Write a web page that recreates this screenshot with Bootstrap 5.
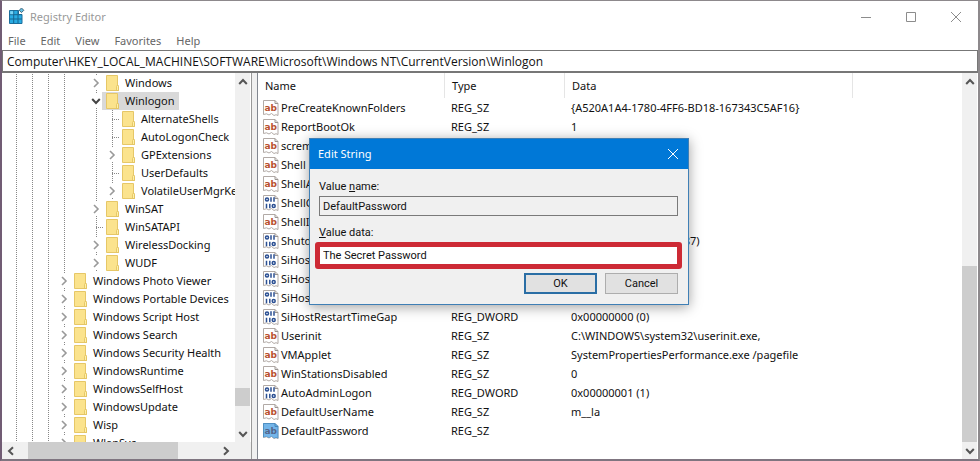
<!DOCTYPE html>
<html lang="en">
<head>
<meta charset="utf-8">
<meta name="viewport" content="width=device-width, initial-scale=1">
<title>Registry Editor</title>
<link href="https://cdn.jsdelivr.net/npm/bootstrap@5.3.0/dist/css/bootstrap.min.css" rel="stylesheet">
<style>
body{font-family:"Noto Sans","Open Sans",sans-serif;font-size:11px;line-height:18px;color:#111}
button,input{font:inherit;color:inherit}
svg{display:block;flex:none}
.frame{border:1px solid #8d898c;border-left:2px solid #715c74;border-bottom:2px solid #7f7580;border-right:2px solid #8d898c}
.titlebar{height:31px;color:#999}
.app-icon{margin:0 4px 0 6px}
.plain{background:none;border:0;padding:0;display:flex;align-items:center;justify-content:center}
.winbtn{width:45px;height:29px;color:#8c8c8c}
.menus{height:18px;gap:15px;padding-left:6px}
.menus a{color:#666;text-decoration:none}
.address{height:23px;border:1px solid #777;border-bottom-width:2px;padding:0 4px;outline:0;background:#fff;width:100%;font-family:"Open Sans","Noto Sans",sans-serif;font-size:12px}
.tree{width:250px;flex:none;border-right:1px solid #999}
.nodes{padding-top:1px}
.node{height:18px;padding-left:6px;display:flex;align-items:stretch;white-space:nowrap}
.cell{width:16px;flex:none}
.guide,.stub{background:repeating-linear-gradient(to bottom,#888 0 1px,transparent 1px 2px) 8px 0/1px 100% no-repeat}
.stub{background:repeating-linear-gradient(to right,#888 0 1px,transparent 1px 2px) 8px 9px/8px 1px no-repeat,repeating-linear-gradient(to bottom,#888 0 1px,transparent 1px 2px) 8px 0/1px 100% no-repeat}
.toggle{color:#999;background:linear-gradient(#888,#888) 8px 0/1px 1px no-repeat,linear-gradient(#888,#888) 8px 16px/1px 1px no-repeat}
.toggle.open{color:#444}
.leaf{display:flex;color:inherit;text-decoration:none;padding:0 4px 0 2px;margin-left:-2px}
.leaf span{padding-left:5px}
.leaf.on{background:#d9d9d9}
.vbar{width:16px;flex:none;background:#f0f0f0;color:#555;border-right:1px solid #fff}
.vbar .plain{width:15px;height:17px}
.hbar{height:17px;flex:none;background:#f0f0f0;color:#555}
.thumb{background:#cdcdcd}
.thumb-short{height:18px;margin-bottom:19px}
.thumb-wide{width:83%}
.split{width:5px;flex:none;background:#f0f0f0}
.list{border-left:1px solid #828790}
.values{width:595px;table-layout:fixed;border-collapse:separate;border-spacing:0}
.values th{font-weight:400;height:25px;padding:0 0 0 7px;border-right:1px solid #e5e5e5}
.values td{height:19px;padding:0 0 0 6px;white-space:nowrap;line-height:19px}
.values td:first-child{padding-left:5px}
.sheet-icon{margin-right:2px}
.dlg{position:absolute;left:309px;top:138px;width:380px;background:#f0f0f0;border:1px solid #3f7fb5;box-shadow:0 2px 12px rgba(0,0,0,.38);font-family:Roboto,"Liberation Sans",sans-serif}
.dlg-head{height:30px;background:#0078d7;color:#fff;font-family:"Noto Sans","Open Sans",sans-serif}
.dlg-body{padding:9px 10px 10px 9px}
.dlg-body label{display:block}
.field{display:block;width:100%;height:20px;border:1px solid #7a7a7a;background:#f0f0f0;padding:0 3px;outline:0}
.marked{border:5px solid #cd2a35;border-radius:3px;background:#fff;height:27px;margin:0 -4px}
.marked input{width:100%;border:0;outline:0;padding:0 3px;display:block;height:17px;line-height:17px}
.act{width:73px;height:21px;background:#e1e1e1;border:1px solid #adadad;padding:0;line-height:17px}
.act.main{border:2px solid #2a6ea5}
</style>
<script src="https://cdn.jsdelivr.net/npm/bootstrap@5.3.0/dist/js/bootstrap.bundle.min.js"></script>
</head>
<body>
<svg width="0" height="0" class="position-absolute" aria-hidden="true">
<symbol id="folder" viewBox="0 0 16 18"><path d="M2.5 1.500h11v9.500l1 1v4.500h-12z" fill="#fbe38d" stroke="#e6c767"/><path d="M12.500 16.500v-4l1-1.500 1 1.500v4z" fill="#fff0a8" stroke="#dfbf5c" stroke-width=".8"/></symbol>
<symbol id="sheet" viewBox="0 0 16 16"><path d="M.5.5h11.500l3 3v12l-2-.8-2 .8-2.500-2-2.500 1.500-2.500-1.200-3 .7z" fill="#fff" stroke="#b2aaa6"/><path d="M12 .5v3h3" fill="none" stroke="#9a9490"/></symbol>
<symbol id="right" viewBox="0 0 10 10"><path d="M3 1l4 4-4 4" fill="none" stroke="currentColor" stroke-width="1.600"/></symbol>
<symbol id="down" viewBox="0 0 10 10"><path d="M1.200 3l3.800 4 3.800-4" fill="none" stroke="currentColor" stroke-width="2"/></symbol>
<symbol id="up" viewBox="0 0 10 10"><path d="M1.200 7l3.800-4 3.800 4" fill="none" stroke="currentColor" stroke-width="2"/></symbol>
</svg>
<div class="frame vh-100 d-flex flex-column bg-white overflow-hidden">
  <header class="titlebar d-flex align-items-center flex-shrink-0">
    <svg class="app-icon" width="18" height="18" viewBox="0 0 18 18"><path d="M1.500 2.500h9v4h3.500v9H1.500z" fill="#29abe2" stroke="#1c6f9d"/><path d="M5.700 2.500v13M10 2.500v13M1.500 6.700H14M1.500 11H14" stroke="#176691" fill="none"/><path d="M2.200 3.200h3v3h-3z" fill="#7ad3f4"/><path d="M13.500 0l2.300 2.300-2.300 2.300-2.300-2.300z" fill="#63bfe3" stroke="#446577"/></svg>
    <span class="flex-grow-1">Registry Editor</span>
    <button class="plain winbtn" aria-label="Minimize"><svg width="12" height="12"><path d="M1 6.500h10" stroke="currentColor"/></svg></button>
    <button class="plain winbtn" aria-label="Maximize"><svg width="12" height="12"><path d="M1.500 1.500h9v9h-9z" fill="none" stroke="currentColor"/></svg></button>
    <button class="plain winbtn" aria-label="Close"><svg width="12" height="12"><path d="M1 1l10 10M11 1L1 11" stroke="currentColor"/></svg></button>
  </header>
  <nav class="menus d-flex flex-shrink-0"><a href="#">File</a><a href="#">Edit</a><a href="#">View</a><a href="#">Favorites</a><a href="#">Help</a></nav>
  <input class="address flex-shrink-0" aria-label="Address" value="Computer\HKEY_LOCAL_MACHINE\SOFTWARE\Microsoft\Windows NT\CurrentVersion\Winlogon">
  <main class="d-flex flex-grow-1 overflow-hidden">
    <section class="tree d-flex flex-column">
      <div class="d-flex flex-grow-1 overflow-hidden">
        <div id="nodes" class="nodes flex-grow-1 overflow-hidden"></div>
        <div class="vbar d-flex flex-column">
          <button class="plain" aria-label="Scroll up"><svg width="10" height="10"><use href="#up"/></svg></button>
          <div class="flex-grow-1 d-flex flex-column justify-content-end"><div class="thumb thumb-short"></div></div>
          <button class="plain" aria-label="Scroll down"><svg width="10" height="10"><use href="#down"/></svg></button>
        </div>
      </div>
      <div class="hbar d-flex">
        <button class="plain px-1" aria-label="Scroll left"><svg width="10" height="10" viewBox="0 0 10 10"><path d="M7 1.200L3 5l4 3.800" fill="none" stroke="currentColor" stroke-width="2"/></svg></button>
        <div class="flex-grow-1 px-2"><div class="thumb thumb-wide h-100"></div></div>
        <button class="plain px-1 me-3" aria-label="Scroll right"><svg width="10" height="10" viewBox="0 0 10 10"><path d="M3 1.200L7 5 3 8.800" fill="none" stroke="currentColor" stroke-width="2"/></svg></button>
      </div>
    </section>
    <div class="split"></div>
    <section class="list d-flex flex-grow-1 overflow-hidden">
      <div class="flex-grow-1 overflow-hidden">
        <table class="values">
          <colgroup><col style="width:187px"><col style="width:120px"><col></colgroup>
          <thead><tr><th scope="col">Name</th><th scope="col">Type</th><th scope="col">Data</th></tr></thead>
          <tbody id="rows"></tbody>
        </table>
      </div>
      <div class="vbar d-flex flex-column">
        <button class="plain" aria-label="Scroll up"><svg width="10" height="10"><use href="#up"/></svg></button>
        <div class="flex-grow-1 d-flex flex-column justify-content-end"><div class="thumb h-50"></div></div>
        <button class="plain" aria-label="Scroll down"><svg width="10" height="10"><use href="#down"/></svg></button>
      </div>
    </section>
  </main>
</div>
<div class="dlg" role="dialog" aria-labelledby="dlgTitle">
  <div class="dlg-head d-flex align-items-center justify-content-between ps-2">
    <span id="dlgTitle">Edit String</span>
    <button class="plain px-2" aria-label="Close dialog"><svg width="14" height="12"><path d="M2 1l10 10M12 1L2 11" stroke="#fff"/></svg></button>
  </div>
  <form class="dlg-body">
    <label for="vname">Value <u>n</u>ame:</label>
    <input id="vname" class="field mb-2" value="DefaultPassword" readonly>
    <label for="vdata"><u>V</u>alue data:</label>
    <div class="marked"><input id="vdata" value="The Secret Password"></div>
    <div class="d-flex justify-content-end gap-2 mt-1"><button type="button" class="act main">OK</button><button type="button" class="act">Cancel</button></div>
  </form>
</div>
<script>
// depth, label, expander (r = collapsed, d = open, s = none)
const nodes=[[5,'Windows','r'],[5,'Winlogon','d'],[6,'AlternateShells','s'],[6,'AutoLogonCheck','s'],[6,'GPExtensions','r'],[6,'UserDefaults','s'],[6,'VolatileUserMgrKey','r'],[5,'WinSAT','r'],[5,'WinSATAPI','s'],[5,'WirelessDocking','r'],[5,'WUDF','r'],[3,'Windows Photo Viewer','r'],[3,'Windows Portable Devices','r'],[3,'Windows Script Host','r'],[3,'Windows Search','r'],[3,'Windows Security Health','r'],[3,'WindowsRuntime','r'],[3,'WindowsSelfHost','r'],[3,'WindowsUpdate','r'],[3,'Wisp','r'],[3,'WlanSvc','r']];
document.getElementById('nodes').innerHTML=nodes.map(([d,t,e])=>{
  let h='';
  for(let i=0;i<d;i++)h+=`<span class="cell${i===4?'':' guide'}"></span>`;
  h+=e==='s'?'<span class="cell stub"></span>':`<button class="plain cell toggle${e==='d'?' open':''}" aria-label="Toggle ${t}"><svg width="10" height="10"><use href="#${e==='d'?'down':'right'}"/></svg></button>`;
  return `<div class="node">${h}<a href="#" class="leaf${e==='d'?' on':''}"><svg width="16" height="18"><use href="#folder"/></svg><span>${t}</span></a></div>`;
}).join('');
const S='REG_SZ',D='REG_DWORD';
const rows=[['PreCreateKnownFolders',S,'{A520A1A4-1780-4FF6-BD18-167343C5AF16}'],['ReportBootOk',S,'1'],['scremoveoption',S,'0'],['Shell',S,'explorer.exe'],['ShellAppRuntime',S,'ShellAppRuntime.exe'],['ShellCritical',D,'0x00000000 (0)'],['ShellInfrastructure',S,'sihost.exe'],['ShutdownFlags',D,'0x80000027 (214748387)'],['SiHostCritical',D,'0x00000000 (0)'],['SiHostReadyTimeOut',D,'0x00000000 (0)'],['SiHostRestartCountLimit',D,'0x00000000 (0)'],['SiHostRestartTimeGap',D,'0x00000000 (0)'],['Userinit',S,'C:\\WINDOWS\\system32\\userinit.exe,'],['VMApplet',S,'SystemPropertiesPerformance.exe /pagefile'],['WinStationsDisabled',S,'0'],['AutoAdminLogon',D,'0x00000001 (1)'],['DefaultUserName',S,'m__la'],['DefaultPassword',S,'']];
document.getElementById('rows').innerHTML=rows.map(([n,t,v],i)=>{
  const glyph=t===S?'<text x="1.500" y="10.500" font-family="DejaVu Sans" font-weight="700" font-size="9" fill="#b9512f">ab</text>'
   :'<g fill="none" stroke="#2b4f92" stroke-width="1.500"><circle cx="4" cy="4.500" r="1.500"/><path d="M8 2.300v4.500M11 2.300v4.500M3.500 8.800v4.500M6.800 8.800v4.500"/><circle cx="10.700" cy="11" r="1.500"/></g>';
  const tint=i===rows.length-1?'<path d="M0 0h12l3.500 3v12.500l-2.500-.5-2 .5-2.500-2-2.500 1.500-2.500-1.200-3.500.7z" fill="#0078d7" opacity=".55"/>':'';
  return `<tr><td><span class="d-flex align-items-center"><svg class="sheet-icon" width="16" height="16"><use href="#sheet"/>${glyph}${tint}</svg>${n}</span></td><td>${t}</td><td>${v}</td></tr>`;
}).join('');
</script>
</body>
</html>
